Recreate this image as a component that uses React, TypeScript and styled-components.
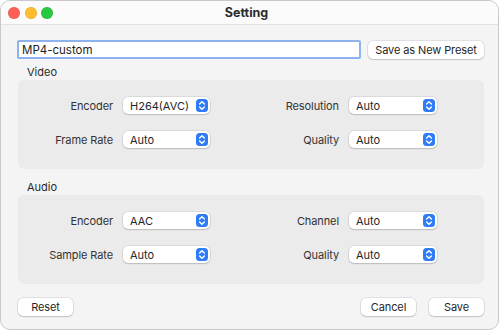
import React from 'react'
import styled, { createGlobalStyle } from 'styled-components'

const GlobalStyle = createGlobalStyle`
  html, body {
    margin: 0;
    padding: 0;
    background: #ffffff;
  }
  body {
    font-family: Inter, 'Liberation Sans', sans-serif;
    -webkit-font-smoothing: antialiased;
  }
`

const Window = styled.div`
  width: 497px;
  height: 328px;
  border: 1px solid #c9c9c9;
  border-radius: 10px;
  overflow: hidden;
  background: #f4f4f4;
  display: flex;
  flex-direction: column;
  color: #2a2a2a;
`

const TitleBar = styled.div`
  height: 24px;
  flex: none;
  display: flex;
  align-items: center;
  background: #fbfbfb;
  border-bottom: 1px solid #e2e2e2;
  box-sizing: border-box;
`

const Lights = styled.div`
  display: flex;
  gap: 4.5px;
  padding-left: 7px;
`

const Light = styled.span<{ $color: string }>`
  width: 12px;
  height: 12px;
  border-radius: 50%;
  background: ${({ $color }) => $color};
  box-shadow: inset 0 0 0 0.5px rgba(0, 0, 0, 0.12);
`

const Title = styled.div`
  flex: 1;
  text-align: center;
  font-size: 12.5px;
  font-weight: 700;
  color: #2b2b2b;
  margin-right: 58px;
`

const Body = styled.div`
  flex: 1;
  display: flex;
  flex-direction: column;
  padding: 15px 14px 0 16px;
`

const PresetRow = styled.div`
  display: flex;
  align-items: center;
  gap: 7px;
`

const NameField = styled.input`
  flex: 1;
  min-width: 0;
  height: 19px;
  box-sizing: border-box;
  border: 2px solid #8db2ee;
  border-radius: 2px;
  background: #ffffff;
  padding: 0 3px;
  font-family: inherit;
  font-size: 11.5px;
  color: #222;
  outline: none;
`

const Button = styled.button<{ $width: number }>`
  height: 18px;
  width: ${({ $width }) => $width}px;
  padding: 0;
  border: none;
  border-radius: 5px;
  background: #ffffff;
  box-shadow: 0 0 0 0.5px rgba(0, 0, 0, 0.16), 0 1px 1.5px rgba(0, 0, 0, 0.14);
  font-family: inherit;
  font-size: 11px;
  letter-spacing: -0.1px;
  white-space: nowrap;
  color: #262626;
  display: flex;
  align-items: center;
  justify-content: center;
`

const SectionLabel = styled.div<{ $top: number }>`
  margin-top: ${({ $top }) => $top}px;
  height: 16px;
  line-height: 16px;
  padding-left: 10px;
  font-size: 11px;
  color: #2a2a2a;
`

const Group = styled.div`
  margin-left: 1px;
  background: #ebebeb;
  border-radius: 6px;
  padding: 17px 0 21px;
  display: grid;
  grid-template-columns: 105px 87px 139px 88px;
  row-gap: 17px;
  align-items: center;
`

const FieldLabel = styled.div`
  text-align: right;
  padding-right: 10px;
  font-size: 11px;
  letter-spacing: -0.1px;
  color: #333;
`

const Select = styled.div`
  height: 17px;
  box-sizing: border-box;
  background: #ffffff;
  border-radius: 5px;
  box-shadow: 0 0 0 0.5px rgba(0, 0, 0, 0.14), 0 1px 1.5px rgba(0, 0, 0, 0.14);
  display: flex;
  align-items: center;
  justify-content: space-between;
  padding: 0 2px 0 7px;
  font-size: 11px;
  color: #262626;
`

const Stepper = styled.span`
  width: 12px;
  height: 13px;
  border-radius: 3.5px;
  background: #2f7cf6;
  display: flex;
  align-items: center;
  justify-content: center;
`

const Footer = styled.div`
  margin-top: 14px;
  margin-left: 1px;
  display: flex;
  align-items: center;
  gap: 13px;
`

const Spacer = styled.div`
  flex: 1;
`

const Chevrons = () => (
  <svg width="8" height="11" viewBox="0 0 8 11">
    <path d="M1.6 4.1 L4 1.7 L6.4 4.1 M1.6 6.9 L4 9.3 L6.4 6.9" fill="none" stroke="#fff" strokeWidth="1.4" strokeLinecap="round" strokeLinejoin="round" />
  </svg>
)

const Field = ({ label, value }: { label: string; value: string }) => (
  <>
    <FieldLabel>{label}</FieldLabel>
    <Select>
      <span>{value}</span>
      <Stepper>
        <Chevrons />
      </Stepper>
    </Select>
  </>
)

const App = () => (
  <>
    <GlobalStyle />
    <Window>
      <TitleBar>
        <Lights>
          <Light $color="#fe5f57" />
          <Light $color="#febc2e" />
          <Light $color="#28c840" />
        </Lights>
        <Title>Setting</Title>
      </TitleBar>
      <Body>
        <PresetRow>
          <NameField defaultValue="MP4-custom" />
          <Button $width={116}>Save as New Preset</Button>
        </PresetRow>
        <SectionLabel $top={5}>Video</SectionLabel>
        <Group>
          <Field label="Encoder" value="H264(AVC)" />
          <Field label="Resolution" value="Auto" />
          <Field label="Frame Rate" value="Auto" />
          <Field label="Quality" value="Auto" />
        </Group>
        <SectionLabel $top={10}>Audio</SectionLabel>
        <Group>
          <Field label="Encoder" value="AAC" />
          <Field label="Channel" value="Auto" />
          <Field label="Sample Rate" value="Auto" />
          <Field label="Quality" value="Auto" />
        </Group>
        <Footer>
          <Button $width={55}>Reset</Button>
          <Spacer />
          <Button $width={55}>Cancel</Button>
          <Button $width={55}>Save</Button>
        </Footer>
      </Body>
    </Window>
  </>
)

export default App
